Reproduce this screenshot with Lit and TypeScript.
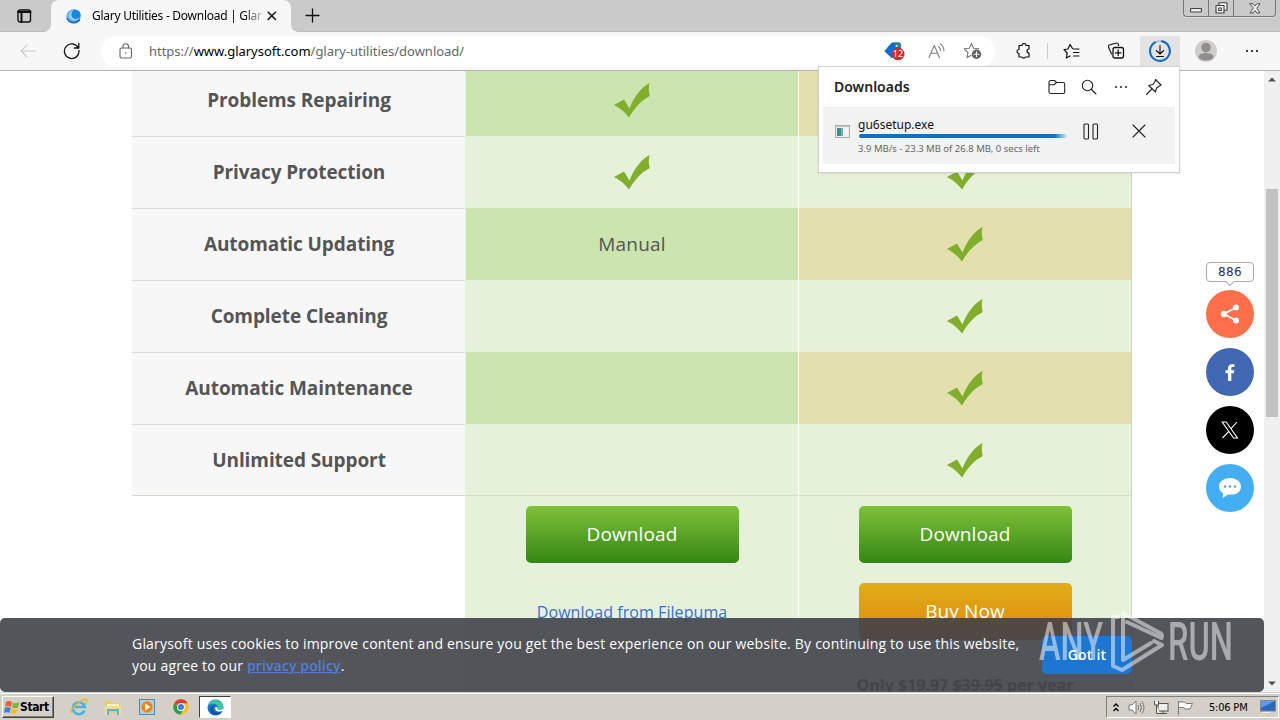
import { LitElement, css, html, svg } from 'lit'
import { customElement, property } from 'lit/decorators.js'
import { classMap } from 'lit/directives/class-map.js'

const check = html`
   <svg class="check" width="36" height="36" viewBox="0 0 36 36">
      <path d="M0 22 L10 16.5 L15.5 25.5 C20 14 27 4.500 35.500 0 C34.500 5 34.500 9 35.800 13 C28 17 21 24 15 34.500 C11 29 6 25 0 22Z" fill="#80ae2c" />
   </svg>`

const icon = (w: number, h: number, content: unknown) => html`
   <svg width="${w}" height="${h}" viewBox="0 0 ${w} ${h}" fill="none" stroke="#222" stroke-width="1.1" stroke-linejoin="round" stroke-linecap="round">${content}</svg>`

const star = 'M8.500 1.500 L10.600 6.300 L15.800 6.800 M8.500 1.500 L6.300 6.300 L1.200 6.800 L5 10.500 L4 15.600 L8 13.400'

/** Tab strip with the window buttons */
@customElement('tab-strip')
export class TabStrip extends LitElement {
   render() {
      return html`
         <div class="tabmenu">
            ${icon(15, 14, svg`<rect x="1" y="1" width="12.500" height="12" rx="2" stroke="#111" stroke-width="1.400" /><path d="M1 3h12.500M4.500 3v10" stroke="#111" stroke-width="2" />`)}
         </div>
         <div class="tab">
            <svg width="15" height="15" viewBox="0 0 15 15">
               <circle cx="7.500" cy="7.500" r="7.200" fill="#62b8ee" />
               <circle cx="9" cy="6" r="5.600" fill="#1b86e0" />
               <path d="M8 1C5 3 4.500 7 7 9C9 10.500 12 10 13.500 8.500C12 12 6.500 12.500 4 9C2 6 4 1.500 8 1Z" fill="#d3effc" opacity=".75" />
               <path d="M1 9C3 14 10 15.500 13.800 10.500" stroke="#1565c8" stroke-width="1.500" fill="none" />
            </svg>
            <span class="title">Glary Utilities - Download | Glar</span>
            ${icon(10, 10, svg`<path d="M1.200 1.200l7.200 7.200M8.400 1.200l-7.200 7.200" stroke-width="1.600" />`)}
         </div>
         <div class="new">${icon(15, 15, svg`<path d="M7.500 1v13M1 7.500h13" stroke="#111" stroke-width="1.300" />`)}</div>
         <div class="buttons">
            <span>${icon(12, 5, svg`<rect x=".5" y=".5" width="11" height="3.500" rx="1" fill="#eee" stroke="#444" />`)}</span>
            <span>${icon(13, 12, svg`<rect x="4" y=".7" width="8" height="7.500" fill="#eee" stroke="#444" /><rect x="1" y="3.500" width="8" height="7.500" fill="#eee" stroke="#444" /><rect x="3.700" y="6" width="2.600" height="2.500" stroke="#444" />`)}</span>
            <span>${icon(12, 11, svg`<path d="M1 .7h3L6 3 8 .7h3L7.800 5.200 11 10H8L6 7.500 4 10H1l3.200-4.800z" fill="#eee" stroke="#444" stroke-width=".9" />`)}</span>
         </div>
      `
   }

   static styles = css`
      :host {
         display: flex;
         height: 32px;
         background: #cacaca;
         box-shadow: inset 0 -1px #bdbdbd;
      }

      .tabmenu {
         width: 51px;
         box-sizing: border-box;
         padding: 9px 0 0 17px;
         line-height: 0;
      }

      .tab {
         position: relative;
         width: 240px;
         box-sizing: border-box;
         display: flex;
         align-items: center;
         padding: 0 14px 0 15px;
         background: #f7f7f7;
         border-radius: 8px 8px 0 0;
      }

      .tab::before,
      .tab::after {
         content: '';
         position: absolute;
         bottom: 0;
         width: 7px;
         height: 7px;
      }

      .tab::before {
         left: -7px;
         background: radial-gradient(circle at 0 0, transparent 6.5px, #f7f7f7 7px);
      }

      .tab::after {
         right: -7px;
         background: radial-gradient(circle at 100% 0, transparent 6.5px, #f7f7f7 7px);
      }

      .title {
         flex: 1;
         margin-left: 11px;
         overflow: hidden;
         white-space: nowrap;
         font: 12px/20px 'Noto Sans', sans-serif;
         letter-spacing: -0.27px;
         color: #000;
         -webkit-mask-image: linear-gradient(90deg, #000 152px, transparent 174px);
         mask-image: linear-gradient(90deg, #000 152px, transparent 174px);
      }

      .new {
         padding: 8px 0 0 14px;
         line-height: 0;
      }

      .buttons {
         display: flex;
         width: 91px;
         height: 16px;
         margin: 0 4px 0 auto;
         border: 1px solid #777;
         border-top: none;
         border-radius: 0 0 4px 4px;
         box-shadow: 0 1px #ddd;
      }

      .buttons span {
         display: flex;
         flex: 1 0 24px;
         align-items: center;
         justify-content: center;
      }

      .buttons span + span {
         border-left: 1px solid #777;
      }

      .buttons span:first-child {
         padding-top: 4px;
      }

      .buttons span:last-child {
         flex-basis: 41px;
      }
   `
}

/** Address bar and the browser icons to its right */
@customElement('tool-bar')
export class ToolBar extends LitElement {
   render() {
      return html`
         <div class="back">${icon(16, 14, svg`<path d="M15.500 7H1M7 1L1 7l6 6" stroke="#cbcbcb" />`)}</div>
         <div class="reload">${icon(17, 17, svg`<path d="M15.300 6A7.300 7.300 0 1 0 16 8.500M15.800 1.500V6H11.300" stroke="#111" stroke-width="1.300" />`)}</div>
         <div class="address">
            ${icon(14, 16, svg`<rect x="1" y="5" width="11.500" height="10" rx="1.500" stroke="#666" /><path d="M4 5V3.500a2.700 2.700 0 0 1 5.500 0V5" stroke="#666" /><circle cx="6.700" cy="10" r=".8" fill="#666" stroke="none" />`)}
            <span class="url">https://<b>www.glarysoft.com</b>/glary-utilities/download/</span>
            <div class="tag">
               ${icon(21, 19, svg`<path d="M8 1h7l1.500 1.500V8L8 15.500 1 9z" fill="#0b6fd0" stroke="#0b6fd0" /><path d="M10.500 1H15l1.500 1.500V8" fill="#2b8b83" stroke="#317d80" /><circle cx="12.500" cy="4" r="1" fill="#fff" stroke="none" /><circle cx="14.200" cy="12" r="6.300" fill="#d22c2b" stroke="none" />`)}
               <span>12</span>
            </div>
            ${icon(17, 16, svg`<path d="M1 14.500L6.300 2.500 11.500 14.500M2.800 10.300h7M10.500 3.500q2 1.500 2 4M12.500 1q3.400 2.500 3.400 7" stroke="#808080" />`)}
            ${icon(19, 18, svg`<path d=${star} stroke="#777" /><circle cx="13.500" cy="12.300" r="4.700" fill="#606060" stroke="none" /><path d="M13.500 9.800v5M11 12.300h5" stroke="#fff" />`)}
         </div>
         <div class="item ext">${icon(17, 16, svg`<path d="M3 2.500h3a2 2 0 0 1 4 0h3v3.500a2 2 0 0 0 0 4v4h-3.500a2 2 0 0 1-3.600 0H3v-3.500a2 2 0 1 1 0-4z" stroke="#111" stroke-width="1.200" />`)}</div>
         <div class="line"></div>
         <div class="item fav">${icon(18, 17, svg`<path d="M9.500 5.500L7 1.500 5 6 1 6.500 4.200 10 3.300 15 7 13M10.500 6H16M10.500 9.500H16M10.500 13H16" stroke="#111" stroke-width="1.200" />`)}</div>
         <div class="item col">${icon(18, 18, svg`<path d="M4.500 12L1.700 5.500a2 2 0 0 1 1.300-2.800L9 1.200a2 2 0 0 1 2.500 1.300v1" stroke="#111" /><rect x="6" y="5.500" width="10.500" height="10.500" rx="2" stroke="#111" stroke-width="1.300" /><path d="M11.200 8v5.600M8.400 10.800H14" stroke="#111" stroke-width="1.300" />`)}</div>
         <div class="item down">${icon(24, 24, svg`<circle cx="12" cy="12" r="9.900" stroke="#b9c2cc" stroke-width="1.800" /><path d="M14 2.300A9.900 9.900 0 1 1 7 3.400" stroke="#0b6cc4" stroke-width="2" /><path d="M12 6.500v8.500M8.300 11.500L12 15l3.700-3.500M8.500 17.500h7" stroke="#111" />`)}</div>
         <div class="item user">
            <svg width="22" height="22" viewBox="0 0 22 22"><circle cx="11" cy="11" r="11" fill="#d0cecd" /><circle cx="11" cy="7.500" r="4.800" fill="#918f8e" /><ellipse cx="11" cy="16.800" rx="7.500" ry="3.800" fill="#918f8e" /></svg>
         </div>
         <div class="item more">${icon(14, 4, svg`<path d="M2 2h.01M7 2h.01M12 2h.01" stroke="#111" stroke-width="2.200" />`)}</div>
      `
   }

   static styles = css`
      :host {
         display: flex;
         height: 39px;
         box-sizing: border-box;
         background: #f7f7f7;
         border-bottom: 1px solid #b4b4b4;
      }

      svg {
         display: block;
         flex: none;
      }

      .back {
         padding: 12px 0 0 20px;
      }

      .reload {
         padding: 10px 0 0 27px;
      }

      .address {
         display: flex;
         align-items: center;
         box-sizing: border-box;
         width: 894px;
         height: 31px;
         margin: 4px 0 0 21px;
         padding: 0 13px 1px 18px;
         background: #fff;
         border-radius: 16px;
      }

      .url {
         flex: 1;
         margin-left: 16px;
         font: 13px/20px 'Noto Sans', sans-serif;
         letter-spacing: -0.02px;
         color: #666;
      }

      .url b {
         font-weight: 400;
         color: #000;
      }

      .tag {
         position: relative;
         margin-right: 23px;
      }

      .tag + svg {
         margin-right: 18px;
      }

      .tag span {
         position: absolute;
         left: 8px;
         top: 5px;
         width: 12px;
         text-align: center;
         font: 9px/14px 'Noto Sans', sans-serif;
         color: #fff;
      }

      .item {
         display: flex;
         align-items: center;
         justify-content: center;
         width: 40px;
         height: 30px;
         margin-top: 4px;
      }

      .ext {
         margin-left: 9px;
      }

      .line {
         width: 1px;
         height: 16px;
         margin: 11px 4px 0 3px;
         background: #ccc;
      }

      .fav {
         margin-right: 4px;
      }

      .down {
         margin-left: 4px;
         background: #e3e3e3;
      }

      .user {
         margin-left: 6px;
      }

      .more {
         margin-left: 6px;
      }
   `
}

/** Downloads flyout */
@customElement('download-panel')
export class DownloadPanel extends LitElement {
   static properties = {
      progress: { type: Number },
   }

   declare progress: number

   constructor() {
      super()
      this.progress = 100
   }

   render() {
      return html`
         <header>
            <span class="title">Downloads</span>
            ${icon(18, 16, svg`<path d="M1 3.500Q1 1.500 3 1.500h3.500l2 2H15q1.700 0 1.700 1.700V13q0 1.500-1.700 1.500H3Q1 14.500 1 13zM1 5.800h5l2.500-2.300" />`)}
            ${icon(16, 16, svg`<circle cx="6.500" cy="6.500" r="5.200" /><path d="M10.500 10.500l4.500 4.500" />`)}
            ${icon(14, 4, svg`<path d="M2 2h.01M7 2h.01M12 2h.01" stroke-width="2" />`)}
            ${icon(18, 18, svg`<path d="M10.500 1.500L16 7l-1.500 1-3 2-1 4L3.800 7.500 8 6.500l2-3zM6.800 11L1.500 16.500" />`)}
         </header>
         <div class="entry">
            <svg class="file" width="15" height="13" viewBox="0 0 15 13">
               <rect x=".5" y=".5" width="14" height="12" fill="#e9eeee" stroke="#aaa" /><path d="M1 1.500h13" stroke="#c9c9c9" />
               <rect x="2" y="3" width="6" height="8" fill="#3f8b8e" /><path d="M10 4h3M10 6h3M10 8h3" stroke="#fff" /><rect x="6" y="3" width="2" height="8" fill="#72b0ad" />
            </svg>
            <div class="info">
               <div class="name">gu6setup.exe</div>
               <div class="track"><div class="bar" style="width:${this.progress}%"></div></div>
               <div class="status">3.9 MB/s - 23.3 MB of 26.8 MB, 0 secs left</div>
            </div>
            ${icon(16, 17, svg`<rect x="1" y="1" width="4.500" height="15" rx="1" /><rect x="10" y="1" width="4.500" height="15" rx="1" />`)}
            <span class="cancel">${icon(14, 14, svg`<path d="M1 1l12 12M13 1L1 13" />`)}</span>
         </div>
      `
   }

   static styles = css`
      :host {
         display: block;
         box-sizing: border-box;
         width: 362px;
         height: 107px;
         padding: 0 4px;
         background: #fff;
         border: 1px solid #d0d0d0;
         box-shadow: 0 1px 3px rgba(0, 0, 0, 0.08);
         font-family: 'Noto Sans', sans-serif;
      }

      header {
         display: flex;
         align-items: center;
         box-sizing: border-box;
         height: 41px;
         padding: 0 12px 1px 11px;
         border-bottom: 1px solid #ececec;
      }

      header svg + svg {
         margin-left: 17px;
      }

      header svg:nth-of-type(2) {
         margin-left: 15px;
      }

      .title {
         flex: 1;
         font-size: 14px;
         font-weight: 600;
         color: #222;
      }

      .entry {
         display: flex;
         align-items: center;
         height: 56px;
         box-sizing: border-box;
         padding: 0 29px 10px 12px;
         background: #f2f2f2;
      }

      .info {
         width: 208px;
         margin: 9px 16px 0 9px;
         white-space: nowrap;
      }

      .name {
         margin-left: -1px;
         font-size: 12px;
         line-height: 17px;
         color: #111;
      }

      .track {
         height: 4px;
         margin: 1px 0;
      }

      .bar {
         height: 4px;
         border-radius: 2px;
         background: linear-gradient(90deg, #0b72c8 94%, #d7e8f6);
      }

      .status {
         margin: 4px 0 0 -1px;
         font-size: 9.5px;
         line-height: 14px;
         color: #666;
      }

      .cancel {
         margin-left: 33px;
         line-height: 0;
      }
   `
}

/** Comparison table of the free and the pro edition */
@customElement('feature-table')
export class FeatureTable extends LitElement {
   static properties = {
      features: { attribute: false },
   }

   declare features: { name: string; free: string; pro: string }[]

   constructor() {
      super()
      this.features = [
         { name: 'Problems Repairing', free: 'yes', pro: 'yes' },
         { name: 'Privacy Protection', free: 'yes', pro: 'yes' },
         { name: 'Automatic Updating', free: 'Manual', pro: 'yes' },
         { name: 'Complete Cleaning', free: '', pro: 'yes' },
         { name: 'Automatic Maintenance', free: '', pro: 'yes' },
         { name: 'Unlimited Support', free: '', pro: 'yes' },
      ]
   }

   renderCell(value: string) {
      return value === 'yes' ? check : html`<span>${value}</span>`
   }

   render() {
      return html`
         ${this.features.map((f, i) => html`
            <div class=${classMap({ row: true, strong: i % 2 === 0 })}>
               <div class="name">${f.name}</div>
               <div class="free">${this.renderCell(f.free)}</div>
               <div class="pro">${this.renderCell(f.pro)}</div>
            </div>
         `)}
         <div class="row last">
            <div></div>
            <div class="free">
               <a class="button">Download</a>
               <a class="link">Download from Filepuma</a>
            </div>
            <div class="pro">
               <a class="button">Download</a>
               <a class="button buy">Buy Now</a>
               <b class="price">Only $19.97 <s>$39.95</s> per year</b>
            </div>
         </div>
      `
   }

   static styles = css`
      :host {
         display: block;
         width: 1000px;
         font: 19px/24px 'Open Sans', sans-serif;
         color: #555;
      }

      .row {
         display: grid;
         grid-template-columns: 333px 333px 334px;
         height: 72px;
      }

      .row > div {
         display: flex;
         align-items: center;
         justify-content: center;
         box-sizing: border-box;
      }

      .row .name {
         background: #f7f7f7;
         border-top: 1px solid #d9d9d9;
         padding: 0 0 1px 1px;
         font-weight: 700;
         letter-spacing: -0.08px;
      }

      .row .free {
         background: #e5f1d9;
         border-left: 1px solid #e5f1d9;
      }

      .row .free span {
         letter-spacing: 0.2px;
         padding-bottom: 1px;
      }

      .row .pro {
         background: #e5f1d9;
         border-left: 1px solid #fff;
         border-right: 1px solid #ccd4c3;
      }

      .check {
         position: relative;
         top: 0.5px;
      }

      .strong .free {
         background: #cce4ae;
      }

      .strong .pro {
         background: #e3dfaf;
      }

      .row:nth-last-child(2) > div {
         box-shadow: inset 0 -1px #d3dbc9;
      }

      .row.last {
         height: 210px;
      }

      .last > div {
         flex-direction: column;
         justify-content: flex-start;
         padding-top: 10px;
      }

      .button {
         width: 213px;
         height: 57px;
         margin-bottom: 20px;
         border-radius: 5px;
         background: linear-gradient(#7fc138, #348715);
         color: #fff;
         font-size: 19px;
         letter-spacing: 0.1px;
         line-height: 56px;
         text-align: center;
      }

      .buy {
         background: linear-gradient(#dfae18, #e2850d);
         margin-bottom: 33px;
      }

      .link {
         margin-top: 17px;
         font-size: 16px;
         letter-spacing: 0.06px;
         color: #3c6fd0;
      }

      .price {
         font-size: 16px;
         white-space: nowrap;
      }
   `
}

/** Floating share buttons */
@customElement('share-bar')
export class ShareBar extends LitElement {
   @property({ type: Number }) count = 0

   render() {
      return html`
         <div class="count">${this.count}</div>
         <div class="round share">
            <svg width="20" height="20" viewBox="0 0 20 20"><path d="M16 3.500L4 10l12 6.500" stroke="#fff" stroke-width="1.800" fill="none" /><circle cx="16" cy="3.500" r="3" fill="#fff" /><circle cx="4" cy="10" r="3.200" fill="#fff" /><circle cx="16" cy="16.500" r="3" fill="#fff" /></svg>
         </div>
         <div class="round facebook">
            <svg width="10" height="17" viewBox="0 0 10 17"><path d="M3 17V9.300H.5V6.200H3V4.200C3 1.500 4.700.2 7 .2h2.400v2.900H7.700C6.600 3.100 6.300 3.700 6.300 4.500v1.700h3L8.900 9.300H6.300V17z" fill="#fff" /></svg>
         </div>
         <div class="round x">
            <svg width="18" height="18" viewBox="0 0 18 18" fill="none" stroke="#fff"><path d="M1.200 1h4L16.500 17h-4zM16 1L10 7.700M7.800 10.300L1.500 17" stroke-width="1.100" /></svg>
         </div>
         <div class="round chat">
            <svg width="24" height="24" viewBox="0 0 24 24"><path d="M12 2C5.800 2 1 5.700 1 10.400c0 3 1.600 5.300 4.200 6.800L4.700 22l5.300-3.500C18 19.500 23 15.700 23 10.400 23 5.700 18.200 2 12 2z" fill="#fff" /><path d="M7 10.500h.01M12 10.500h.01M17 10.500h.01" stroke="#6d9cbd" stroke-width="2.600" stroke-linecap="round" /></svg>
         </div>
      `
   }

   static styles = css`
      :host {
         display: flex;
         flex-direction: column;
         gap: 10px;
         width: 48px;
      }

      .count {
         position: relative;
         box-sizing: border-box;
         height: 20px;
         margin-bottom: -2px;
         border: 1px solid #aaa;
         border-radius: 4px;
         background: #fff;
         text-align: center;
         font: 12px/19px 'DejaVu Sans', sans-serif;
         letter-spacing: 0.4px;
         color: #283060;
      }

      .count::after {
         content: '';
         position: absolute;
         left: 20px;
         bottom: -4px;
         width: 5px;
         height: 5px;
         border: solid #aaa;
         border-width: 0 1px 1px 0;
         background: #fff;
         transform: rotate(45deg);
      }

      .round {
         display: flex;
         align-items: center;
         justify-content: center;
         height: 48px;
         border-radius: 50%;
      }

      .share {
         background: #ff6f4b;
      }

      .facebook {
         background: #4267b2;
      }

      .x {
         background: #000;
      }

      .chat {
         background: #44aef3;
      }
   `
}

@customElement('cookie-bar')
export class CookieBar extends LitElement {
   render() {
      return html`
         <p>Glarysoft uses cookies to improve content and ensure you get the best experience on our website. By continuing to use this website,<br>you agree to our <a>privacy policy</a>.</p>
         <button>Got it</button>
      `
   }

   static styles = css`
      :host {
         display: flex;
         align-items: center;
         box-sizing: border-box;
         padding: 0 132px;
         background: rgba(64, 67, 73, 0.9);
         border-radius: 5px;
         font: 14px/22px 'Open Sans', sans-serif;
         color: #fff;
      }

      p {
         flex: 1;
         margin: 0;
         white-space: nowrap;
         letter-spacing: 0.2px;
      }

      a {
         color: #527fdc;
         font-weight: 600;
         letter-spacing: 0.13px;
         text-decoration: underline;
      }

      button {
         width: 90px;
         height: 38px;
         padding: 0 0 2px;
         border: none;
         border-radius: 5px;
         background: #1d76d0;
         color: #fff;
         font: 600 14px 'Open Sans', sans-serif;
         letter-spacing: 0.2px;
      }
   `
}

@customElement('task-bar')
export class TaskBar extends LitElement {
   render() {
      return html`
         <div class="start">
            <svg width="16" height="16" viewBox="0 0 16 16">
               <path d="M2 3Q5 1 8 3L7 8Q4 6 1 8z" fill="#e8622a" /><path d="M9 3.500Q12 5 15.500 3L14 8.500Q11 10 8 8.500z" fill="#7ab83c" />
               <path d="M.8 9Q4 7 6.800 9L5.500 14Q3 12.500 0 14z" fill="#3d83d0" /><path d="M7.800 9.500Q11 11 14 9.500L12.500 14.500Q9.500 16 6.500 14.500z" fill="#f4c02c" />
            </svg>
            Start
         </div>
         <div class="apps">
            <span>
               <svg width="18" height="18" viewBox="0 0 18 18"><path d="M14.500 12.500A6 6 0 1 1 14.800 9H5" fill="none" stroke="#49b2e8" stroke-width="2.600" /><path d="M1.500 15.500C-1 13 7 3.500 15 1.500C18 1 17 4 15.500 6" fill="none" stroke="#e9b72d" stroke-width="1.400" /></svg>
            </span>
            <span>
               <svg width="18" height="17" viewBox="0 0 18 17"><path d="M1 2h6l1 2h8v10H1z" fill="#eacb68" /><path d="M3 5h12v5H3z" fill="#fff2ba" /><path d="M1 7h16v9h-3v-4H5v4H1z" fill="#f4df8d" /><path d="M4 16v-5h10v5" stroke="#57aee0" stroke-width="1.800" fill="none" /></svg>
            </span>
            <span>
               <svg width="16" height="16" viewBox="0 0 16 16"><rect x=".5" y=".5" width="15" height="15" fill="#a8d1ee" stroke="#4d88ba" /><circle cx="8" cy="8" r="5.700" fill="#f28318" /><path d="M6.200 4.500v7l5-3.500z" fill="#fff" /></svg>
            </span>
            <span>
               <svg width="16" height="16" viewBox="0 0 16 16"><circle cx="8" cy="8" r="7.700" fill="#f4c22c" /><path d="M8 8L1.200 4.300A7.700 7.700 0 0 1 14.800 4.300H8z" fill="#dc3b31" /><path d="M1.200 4.300A7.700 7.700 0 0 0 7.500 15.700L10.500 10 8 8z" fill="#2f9d51" /><circle cx="8" cy="8" r="3.900" fill="#fff" /><circle cx="8" cy="8" r="3" fill="#3f7de0" /></svg>
            </span>
            <span class="active">
               <svg width="17" height="17" viewBox="0 0 17 17"><circle cx="8.500" cy="8.500" r="8" fill="#1578c9" /><path d="M1 7C2 1 8 0 12 1.800C16 3.500 17 8 15.500 10C14 12 10 11.500 10.500 9.500C12 6 6 2.500 1 7Z" fill="#3bc8a4" /><path d="M6.500 7C4 12 9 15.500 14.500 12.500C12 17 5 17.500 3.500 12C2.800 9.500 4 7.500 6.500 7Z" fill="#13529d" /><path d="M8.500 8C7 12 11.500 13.500 15 12L17 12.500V9.500L15.500 10C13.500 11.500 10 11.300 10.500 9.300Q10 7.500 8.500 8Z" fill="#fff" /></svg>
            </span>
         </div>
         <div class="tray">
            <svg width="6" height="11" viewBox="0 0 6 11"><path d="M.5 4.500L3 2l2.500 2.500M.5 9L3 6.500 5.500 9" fill="none" stroke="#000" stroke-width="1.400" /></svg>
            <svg class="sound" width="17" height="15" viewBox="0 0 17 15" fill="#fff" stroke="#777"><path d="M1 5h3l4-4v13l-4-4H1z" /><path d="M10 5q1.500 2.500 0 5M12 3q3 4.500 0 9M14 1.500q4 6 0 12" fill="none" /></svg>
            <svg width="16" height="15" viewBox="0 0 16 15" fill="#eee" stroke="#555"><rect x="5" y="3.500" width="10" height="7.500" /><path d="M7 13.500h7M10 11v2.500M1.500 1v4h4V1M3.500 5v8.500H7" /></svg>
            <svg width="17" height="15" viewBox="0 0 17 15" fill="#fff" stroke="#777"><path d="M1.500 1v14M1.500 2h6l1.500 1.500h6.500L13 9H8L6.500 7.500h-5" /></svg>
            <span class="time">5:06 PM</span>
            <svg width="16" height="14" viewBox="0 0 16 14"><rect x=".5" y=".5" width="15" height="10.500" fill="#2869be" stroke="#888" /><path d="M1 1h14L1 8z" fill="#5a9be5" /><path d="M2 12.500h8" stroke="#eee" /></svg>
         </div>
      `
   }

   static styles = css`
      :host {
         display: flex;
         box-sizing: border-box;
         height: 28px;
         padding: 4px 0 1px 2px;
         background: #d4d0c8;
         box-shadow: inset 0 1px #d4d0c8, inset 0 2px #fff;
      }

      svg {
         display: block;
         flex: none;
      }

      .start {
         display: flex;
         align-items: center;
         box-sizing: border-box;
         width: 52px;
         height: 22px;
         padding: 0 0 1px 1px;
         border: 1px solid;
         border-color: #fff #404040 #404040 #fff;
         box-shadow: inset -1px -1px #808080;
         font: 700 12px 'DejaVu Sans Condensed', 'DejaVu Sans', sans-serif;
         font-stretch: condensed;
         letter-spacing: -0.4px;
      }

      .apps {
         display: flex;
         gap: 2px;
         margin-left: 9px;
      }

      .apps span {
         display: flex;
         align-items: center;
         justify-content: center;
         box-sizing: border-box;
         width: 32px;
         height: 22px;
      }

      .apps .active {
         background: #fff;
         border: 1px solid;
         border-color: #404040 #fff #fff #404040;
      }

      .tray {
         display: flex;
         align-items: center;
         box-sizing: border-box;
         width: 173px;
         height: 22px;
         margin: 0 1px 0 auto;
         padding: 0 2px 0 6px;
         gap: 8px;
         border: 1px solid;
         border-color: #808080 #fff #fff #808080;
      }

      .sound {
         margin-left: 1px;
      }

      .time {
         flex: 1;
         margin-left: 7px;
         font: 11px 'DejaVu Sans Condensed', 'DejaVu Sans', sans-serif;
         font-stretch: condensed;
         letter-spacing: -0.2px;
         white-space: nowrap;
      }
   `
}

@customElement('app-root')
export class AppRoot extends LitElement {
   render() {
      return html`
         <tab-strip></tab-strip>
         <tool-bar></tool-bar>
         <main>
            <div class="page"><feature-table></feature-table></div>
            <div class="scroll">
               <svg width="8" height="5" viewBox="0 0 8 5"><path d="M0 4.500h8L4 .5z" fill="#505050" /></svg>
               <div class="thumb"></div>
               <svg width="8" height="5" viewBox="0 0 8 5"><path d="M0 .5h8L4 4.500z" fill="#505050" /></svg>
            </div>
            <share-bar class="share" count="886"></share-bar>
            <cookie-bar class="cookies"></cookie-bar>
         </main>
         <task-bar></task-bar>
         <download-panel class="downloads"></download-panel>
         <svg class="mark" width="192" height="66" viewBox="0 0 192 66">
            <g font-family="Roboto, sans-serif" font-size="53" font-weight="500" fill="#fff">
               <text x="-1" y="53" textLength="64" lengthAdjust="spacingAndGlyphs">ANY</text>
               <text x="128" y="53" textLength="65" lengthAdjust="spacingAndGlyphs">RUN</text>
            </g>
            <g fill="none" stroke="#fff" stroke-width="4" stroke-linejoin="round" stroke-linecap="round">
               <path d="M111 36L83 53V6l37 20q3 2 1.500 5L87 15" />
               <path d="M78 10h-5v49l9 4 40-25-8-4" />
            </g>
         </svg>
      `
   }

   static styles = css`
      :host {
         position: relative;
         display: flex;
         flex-direction: column;
         width: 1280px;
         height: 720px;
         overflow: hidden;
         background: #fff;
      }

      main {
         position: relative;
         display: flex;
         flex: 1;
         min-height: 0;
         overflow: hidden;
      }

      .page {
         flex: 1;
         overflow: hidden;
      }

      feature-table {
         margin: -7px 0 0 132px;
      }

      .scroll {
         display: flex;
         flex-direction: column;
         align-items: center;
         justify-content: space-between;
         box-sizing: border-box;
         width: 16px;
         padding: 6px 0;
         background: #f0f0f0;
      }

      .thumb {
         width: 12px;
         height: 228px;
         margin: 107px 0 auto;
         background: #c1c1c1;
      }

      .share {
         position: absolute;
         right: 26px;
         top: 191px;
      }

      .cookies {
         position: absolute;
         left: 0;
         right: 16px;
         bottom: 0;
         height: 74px;
      }

      .downloads {
         position: absolute;
         left: 818px;
         top: 66px;
      }

      .mark {
         position: absolute;
         left: 1040px;
         top: 607px;
         overflow: visible;
         opacity: 0.5;
      }
   `
}
